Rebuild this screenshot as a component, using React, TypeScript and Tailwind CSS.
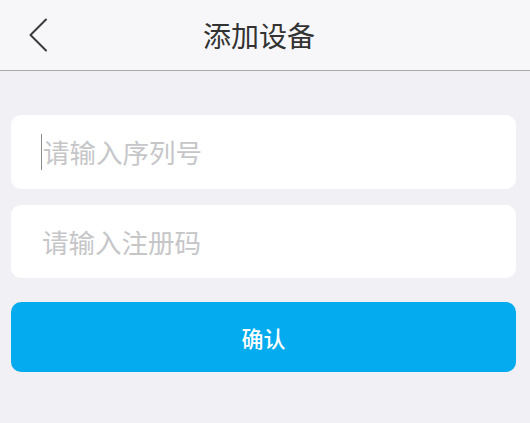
import { useState } from "react"

const font = { fontFamily: '"Noto Sans CJK SC", "Noto Sans", sans-serif' }

export default function App() {
    const [serial, setSerial] = useState("")
    const [code, setCode] = useState("")

    return (
        <div className="w-[530px] h-[423px] bg-[#f0f0f5] flex flex-col" style={font}>
            {/* header */}
            <div className="h-[71px] bg-[#f7f7f9] border-b border-[#a9a9ad] flex items-center relative shrink-0">
                <button className="w-[60px] h-[70px] flex items-center justify-center pl-[16px]">
                    <svg width="20" height="34" viewBox="0 0 20 34" fill="none">
                        <path d="M18 1.5 L2.5 17 L18 32.5" stroke="#3a3a3a" strokeWidth="2" strokeLinecap="round" strokeLinejoin="round" />
                    </svg>
                </button>
                <h1 className="flex-1 text-center text-[28px] text-[#333] pr-[72px] leading-none">添加设备</h1>
            </div>

            {/* form */}
            <div className="flex flex-col pl-[11px] pr-[14px] pt-[44px]">
                <div className="h-[74px] bg-white rounded-[10px] flex items-center pl-[30px]">
                    <span className="w-px h-[36px] bg-[#8a8a8a] shrink-0" />
                    <input
                        value={serial}
                        onChange={e => setSerial(e.target.value)}
                        placeholder="请输入序列号"
                        className="flex-1 bg-transparent outline-none text-[26.5px] text-[#333] placeholder:text-[#c6c6c9] pl-[1px]"
                    />
                </div>
                <div className="h-[73px] bg-white rounded-[10px] flex items-center pl-[31px] mt-[16px]">
                    <input
                        value={code}
                        onChange={e => setCode(e.target.value)}
                        placeholder="请输入注册码"
                        className="flex-1 bg-transparent outline-none text-[26.5px] text-[#333] placeholder:text-[#c6c6c9]"
                    />
                </div>
                <button className="h-[70px] mt-[24px] bg-[#04abee] rounded-[10px] text-white text-[22px] font-medium">确认</button>
            </div>
        </div>
    )
}
